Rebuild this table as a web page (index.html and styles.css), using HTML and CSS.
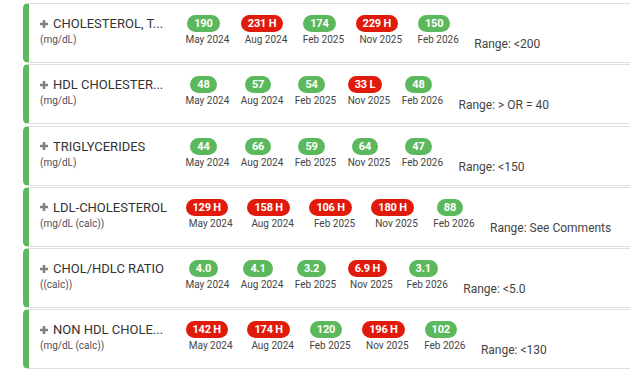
FILE: index.html
```html
<!DOCTYPE html>
<html lang="en">
<head>
<meta charset="utf-8">
<title>Lipid panel</title>
<link rel="stylesheet" href="styles.css">
</head>
<body>
<div class="list">

  <div class="card">
    <div class="name">
      <div class="title"><svg class="plus" viewBox="0 0 8 8" width="8" height="8"><rect x="2.75" y="0" width="2.5" height="8"/><rect x="0" y="2.75" width="8" height="2.5"/></svg><span>CHOLESTEROL, T...</span></div>
      <div class="unit">(mg/dL)</div>
    </div>
    <div class="result"><span class="badge ok">190</span><span class="date">May 2024</span></div>
    <div class="result"><span class="badge high">231 H</span><span class="date">Aug 2024</span></div>
    <div class="result"><span class="badge ok">174</span><span class="date">Feb 2025</span></div>
    <div class="result"><span class="badge high">229 H</span><span class="date">Nov 2025</span></div>
    <div class="result"><span class="badge ok">150</span><span class="date">Feb 2026</span></div>
    <div class="range">Range: &lt;200</div>
  </div>

  <div class="card">
    <div class="name">
      <div class="title"><svg class="plus" viewBox="0 0 8 8" width="8" height="8"><rect x="2.75" y="0" width="2.5" height="8"/><rect x="0" y="2.75" width="8" height="2.5"/></svg><span>HDL CHOLESTER...</span></div>
      <div class="unit">(mg/dL)</div>
    </div>
    <div class="result"><span class="badge ok">48</span><span class="date">May 2024</span></div>
    <div class="result"><span class="badge ok">57</span><span class="date">Aug 2024</span></div>
    <div class="result"><span class="badge ok">54</span><span class="date">Feb 2025</span></div>
    <div class="result"><span class="badge high">33 L</span><span class="date">Nov 2025</span></div>
    <div class="result"><span class="badge ok">48</span><span class="date">Feb 2026</span></div>
    <div class="range">Range: &gt; OR = 40</div>
  </div>

  <div class="card">
    <div class="name">
      <div class="title"><svg class="plus" viewBox="0 0 8 8" width="8" height="8"><rect x="2.75" y="0" width="2.5" height="8"/><rect x="0" y="2.75" width="8" height="2.5"/></svg><span>TRIGLYCERIDES</span></div>
      <div class="unit">(mg/dL)</div>
    </div>
    <div class="result"><span class="badge ok">44</span><span class="date">May 2024</span></div>
    <div class="result"><span class="badge ok">66</span><span class="date">Aug 2024</span></div>
    <div class="result"><span class="badge ok">59</span><span class="date">Feb 2025</span></div>
    <div class="result"><span class="badge ok">64</span><span class="date">Nov 2025</span></div>
    <div class="result"><span class="badge ok">47</span><span class="date">Feb 2026</span></div>
    <div class="range">Range: &lt;150</div>
  </div>

  <div class="card">
    <div class="name">
      <div class="title"><svg class="plus" viewBox="0 0 8 8" width="8" height="8"><rect x="2.75" y="0" width="2.5" height="8"/><rect x="0" y="2.75" width="8" height="2.5"/></svg><span>LDL-CHOLESTEROL</span></div>
      <div class="unit">(mg/dL (calc))</div>
    </div>
    <div class="result"><span class="badge high">129 H</span><span class="date">May 2024</span></div>
    <div class="result"><span class="badge high">158 H</span><span class="date">Aug 2024</span></div>
    <div class="result"><span class="badge high">106 H</span><span class="date">Feb 2025</span></div>
    <div class="result"><span class="badge high">180 H</span><span class="date">Nov 2025</span></div>
    <div class="result"><span class="badge ok">88</span><span class="date">Feb 2026</span></div>
    <div class="range">Range: See Comments</div>
  </div>

  <div class="card">
    <div class="name">
      <div class="title"><svg class="plus" viewBox="0 0 8 8" width="8" height="8"><rect x="2.75" y="0" width="2.5" height="8"/><rect x="0" y="2.75" width="8" height="2.5"/></svg><span>CHOL/HDLC RATIO</span></div>
      <div class="unit">((calc))</div>
    </div>
    <div class="result"><span class="badge ok">4.0</span><span class="date">May 2024</span></div>
    <div class="result"><span class="badge ok">4.1</span><span class="date">Aug 2024</span></div>
    <div class="result"><span class="badge ok">3.2</span><span class="date">Feb 2025</span></div>
    <div class="result"><span class="badge high">6.9 H</span><span class="date">Nov 2025</span></div>
    <div class="result"><span class="badge ok">3.1</span><span class="date">Feb 2026</span></div>
    <div class="range">Range: &lt;5.0</div>
  </div>

  <div class="card">
    <div class="name">
      <div class="title"><svg class="plus" viewBox="0 0 8 8" width="8" height="8"><rect x="2.75" y="0" width="2.5" height="8"/><rect x="0" y="2.75" width="8" height="2.5"/></svg><span>NON HDL CHOLE...</span></div>
      <div class="unit">(mg/dL (calc))</div>
    </div>
    <div class="result"><span class="badge high">142 H</span><span class="date">May 2024</span></div>
    <div class="result"><span class="badge high">174 H</span><span class="date">Aug 2024</span></div>
    <div class="result"><span class="badge ok">120</span><span class="date">Feb 2025</span></div>
    <div class="result"><span class="badge high">196 H</span><span class="date">Nov 2025</span></div>
    <div class="result"><span class="badge ok">102</span><span class="date">Feb 2026</span></div>
    <div class="range">Range: &lt;130</div>
  </div>

</div>
</body>
</html>
```
FILE: styles.css
```css
html, body {
  margin: 0;
  padding: 0;
  background: #ffffff;
  overflow: hidden;
}

body {
  font-family: Roboto, "Liberation Sans", Arial, sans-serif;
  color: #333333;
}

.list {
  display: flex;
  flex-direction: column;
  gap: 1.25px;
  padding: 3px 0 0 23px;
  width: 620px;
}

.card {
  box-sizing: border-box;
  height: 60px;
  display: flex;
  align-items: flex-start;
  gap: 11.5px;
  padding: 11px 0 0 11px;
  background: #ffffff;
  border: 1px solid #dedede;
  border-left: 6px solid #5cb85c;
  border-radius: 5px 0 0 5px;
}

.name {
  width: 134px;
  flex-shrink: 0;
}

.title {
  display: flex;
  align-items: center;
  gap: 5px;
  height: 18px;
  font-size: 13px;
  line-height: 18px;
  white-space: nowrap;
  color: #333333;
}

.plus {
  fill: #808080;
  flex-shrink: 0;
  margin-top: -1px;
}

.unit {
  margin-top: 1px;
  font-size: 10px;
  line-height: 12px;
  color: #4f4f5a;
  white-space: nowrap;
}

.result {
  display: flex;
  flex-direction: column;
  align-items: center;
  flex-shrink: 0;
}

.badge {
  box-sizing: border-box;
  height: 17px;
  padding: 0 7px;
  margin-right: 8px;
  border-radius: 9px;
  font-size: 11px;
  font-weight: 700;
  line-height: 17px;
  color: #ffffff;
  letter-spacing: -0.2px;
  white-space: nowrap;
}

.badge.ok {
  background: #5cb85c;
}

.badge.high {
  background: #e11b0c;
}

.date {
  margin-top: 2px;
  font-size: 10px;
  line-height: 12px;
  color: #444444;
  white-space: nowrap;
}

.range {
  margin: 22px 0 0 4px;
  font-size: 12px;
  line-height: 14px;
  color: #444444;
  white-space: nowrap;
}
```
